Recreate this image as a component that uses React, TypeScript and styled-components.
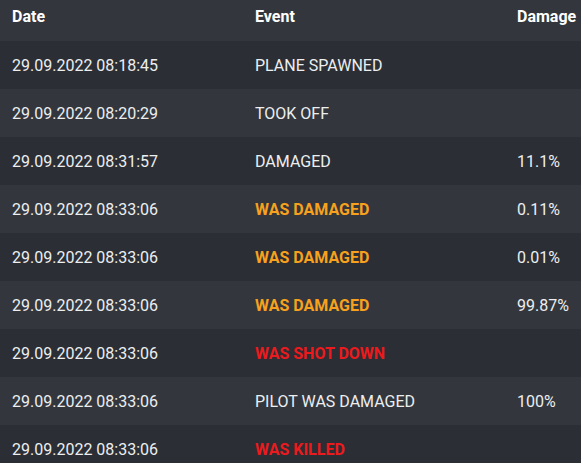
import React from 'react';
import styled, { createGlobalStyle } from 'styled-components';

type Tone = 'normal' | 'warn' | 'danger';

interface LogEntry {
  date: string;
  event: string;
  damage?: string;
  tone?: Tone;
}

const entries: LogEntry[] = [
  { date: '29.09.2022 08:18:45', event: 'PLANE SPAWNED' },
  { date: '29.09.2022 08:20:29', event: 'TOOK OFF' },
  { date: '29.09.2022 08:31:57', event: 'DAMAGED', damage: '11.1%' },
  { date: '29.09.2022 08:33:06', event: 'WAS DAMAGED', damage: '0.11%', tone: 'warn' },
  { date: '29.09.2022 08:33:06', event: 'WAS DAMAGED', damage: '0.01%', tone: 'warn' },
  { date: '29.09.2022 08:33:06', event: 'WAS DAMAGED', damage: '99.87%', tone: 'warn' },
  { date: '29.09.2022 08:33:06', event: 'WAS SHOT DOWN', tone: 'danger' },
  { date: '29.09.2022 08:33:06', event: 'PILOT WAS DAMAGED', damage: '100%' },
  { date: '29.09.2022 08:33:06', event: 'WAS KILLED', tone: 'danger' },
];

const App = () => {
  return (
    <>
      <GlobalStyle />
      <Table>
        <HeaderRow>
          <HeadCell>Date</HeadCell>
          <HeadCell>Event</HeadCell>
          <HeadCell>Damage</HeadCell>
        </HeaderRow>
        {entries.map((entry, i) => (
          <Row key={i} $odd={i % 2 === 0}>
            <Cell>{entry.date}</Cell>
            <EventCell $tone={entry.tone || 'normal'}>{entry.event}</EventCell>
            <Cell>{entry.damage}</Cell>
          </Row>
        ))}
      </Table>
    </>
  );
};

export default App;

const GlobalStyle = createGlobalStyle`
  body {
    margin: 0;
    background: #2b2e34;
    font-family: Roboto, 'Liberation Sans', sans-serif;
    overflow: hidden;
  }
`;

const Table = styled.div`
  width: 581px;
  color: #eceef0;
  font-size: 16px;
`;

const columns = '243px 262px 1fr';

const HeaderRow = styled.div`
  display: grid;
  grid-template-columns: ${columns};
  height: 41px;
  box-sizing: border-box;
  padding-top: 7px;
  background: #33363c;
`;

const HeadCell = styled.div`
  padding: 0 4px 0 12px;
  font-weight: 700;
  color: #ffffff;
  white-space: nowrap;
`;

const Row = styled.div<{ $odd: boolean }>`
  display: grid;
  grid-template-columns: ${columns};
  align-items: center;
  height: 48px;
  background: ${(p) => (p.$odd ? '#2b2e34' : '#33373d')};
`;

const Cell = styled.div`
  padding: 0 4px 0 12px;
  white-space: nowrap;
`;

const toneColor: Record<Tone, string> = {
  normal: '#eceef0',
  warn: '#f7a11d',
  danger: '#ec1a1d',
};

const EventCell = styled(Cell)<{ $tone: Tone }>`
  color: ${(p) => toneColor[p.$tone]};
  font-weight: ${(p) => (p.$tone === 'normal' ? 400 : 700)};
`;
